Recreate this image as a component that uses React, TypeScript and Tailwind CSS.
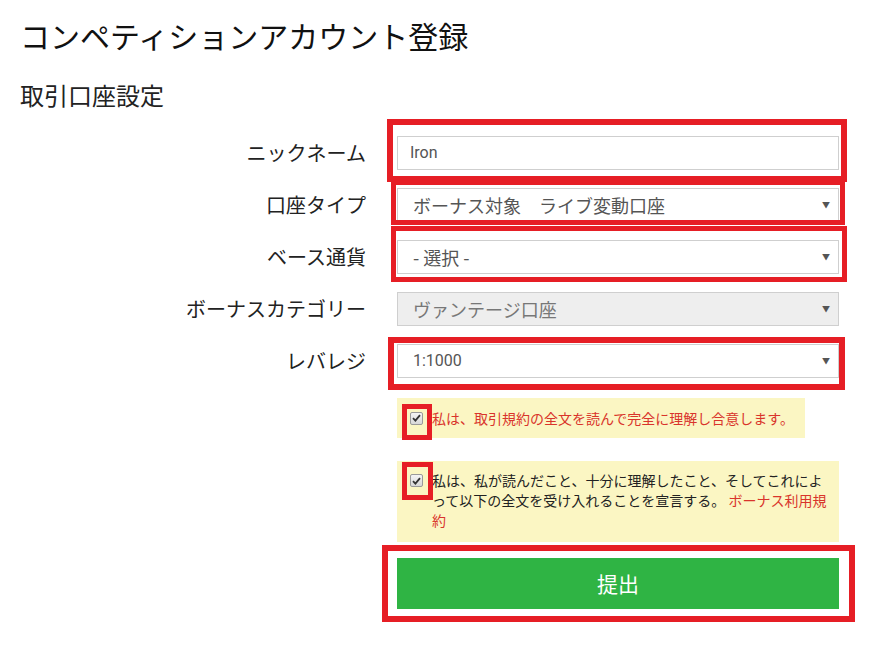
import React from "react";

const jp = { fontFamily: '"Noto Sans CJK JP", "Noto Sans", sans-serif' };
const latin = { fontFamily: 'Roboto, "Noto Sans CJK JP", sans-serif' };

function Label({ children }: { children: React.ReactNode }) {
  return (
    <div className="flex h-[34px] items-center justify-end text-[20px] text-[#222]" style={jp}>
      {children}
    </div>
  );
}

function SelectBox({
  value,
  disabled,
  small,
}: {
  value: string;
  disabled?: boolean;
  small?: boolean;
}) {
  return (
    <div
      className={
        "flex h-[34px] items-center justify-between border border-[#cfcfcf] pl-[15px] pr-[8px] " +
        (disabled ? "bg-[#eeeeee] text-[#777]" : "bg-white text-[#555]")
      }
    >
      <span className={small ? "text-[16px]" : "text-[18px]"} style={small ? latin : jp}>
        {value}
      </span>
      <span className="text-[8px] text-[#555]">▼</span>
    </div>
  );
}

function CheckMark() {
  return (
    <span className="flex h-[13px] w-[13px] shrink-0 items-center justify-center rounded-[2px] border border-[#9a9a9a] bg-gradient-to-b from-[#f4f4f4] to-[#d8d8d8]">
      <svg width="9" height="8" viewBox="0 0 9 8">
        <path d="M1 4.2 L3.4 6.6 L8 1.2" fill="none" stroke="#333" strokeWidth="1.8" />
      </svg>
    </span>
  );
}

// red outline drawn on top of a field
function Mark({ className }: { className: string }) {
  return <div className={"pointer-events-none absolute border-[#e61e25] " + className} />;
}

export default function App() {
  return (
    <div className="relative h-[656px] w-[889px] overflow-hidden bg-white" style={jp}>
      <div className="pl-[20px] pt-[15px]">
        <h1 className="text-[30px] leading-[40px] text-[#111]">コンペティションアカウント登録</h1>
        <h2 className="mt-[24px] text-[24px] leading-[32px] text-[#222]">取引口座設定</h2>
      </div>

      <div className="mt-[25px] grid grid-cols-[366px_442px] gap-x-[31px]">
        <div className="flex flex-col gap-[18px]">
          <Label>ニックネーム</Label>
          <Label>口座タイプ</Label>
          <Label>ベース通貨</Label>
          <Label>ボーナスカテゴリー</Label>
          <Label>レバレジ</Label>
        </div>
        <div className="flex flex-col gap-[18px]">
          <div className="flex h-[34px] items-center border border-[#cfcfcf] bg-white pl-[12px]">
            <span className="text-[16px] text-[#555]" style={latin}>
              Iron
            </span>
          </div>
          <SelectBox value="ボーナス対象　ライブ変動口座" />
          <SelectBox value="- 選択 -" />
          <SelectBox value="ヴァンテージ口座" disabled />
          <SelectBox value="1:1000" small />
        </div>
      </div>

      <div className="ml-[397px] w-[442px]">
        <div className="mt-[20px] flex h-[40px] w-[408px] items-center gap-[9px] bg-[#fbf6c3] pl-[13px]">
          <CheckMark />
          <span className="text-[14px] text-[#d9342b]">私は、取引規約の全文を読んで完全に理解し合意します。</span>
        </div>

        <div className="mt-[23px] flex gap-[9px] bg-[#fbf6c3] pb-[12px] pl-[13px] pt-[9px]">
          <div className="pt-[4px]">
            <CheckMark />
          </div>
          <p className="w-[400px] text-[14px] leading-[20px] text-[#222]">
            私は、私が読んだこと、十分に理解したこと、そしてこれによって以下の全文を受け入れることを宣言する。{" "}
            <span className="text-[#d9342b]">ボーナス利用規約</span>
          </p>
        </div>

        <button className="mt-[16px] flex h-[51px] w-full items-center justify-center bg-[#2fb444] text-[21px] text-white">
          提出
        </button>
      </div>

      <Mark className="left-[387px] top-[119px] h-[63px] w-[460px] border-[6px]" />
      <Mark className="left-[391px] top-[180px] h-[45px] w-[454px] border-[5px]" />
      <Mark className="left-[391px] top-[226px] h-[56px] w-[456px] border-[5px]" />
      <Mark className="left-[388px] top-[337px] h-[53px] w-[457px] border-[6px]" />
      <Mark className="left-[402px] top-[404px] h-[36px] w-[30px] border-[5px]" />
      <Mark className="left-[402px] top-[462px] h-[38px] w-[31px] border-[5px]" />
      <Mark className="left-[382px] top-[545px] h-[77px] w-[473px] border-[6px]" />
    </div>
  );
}
